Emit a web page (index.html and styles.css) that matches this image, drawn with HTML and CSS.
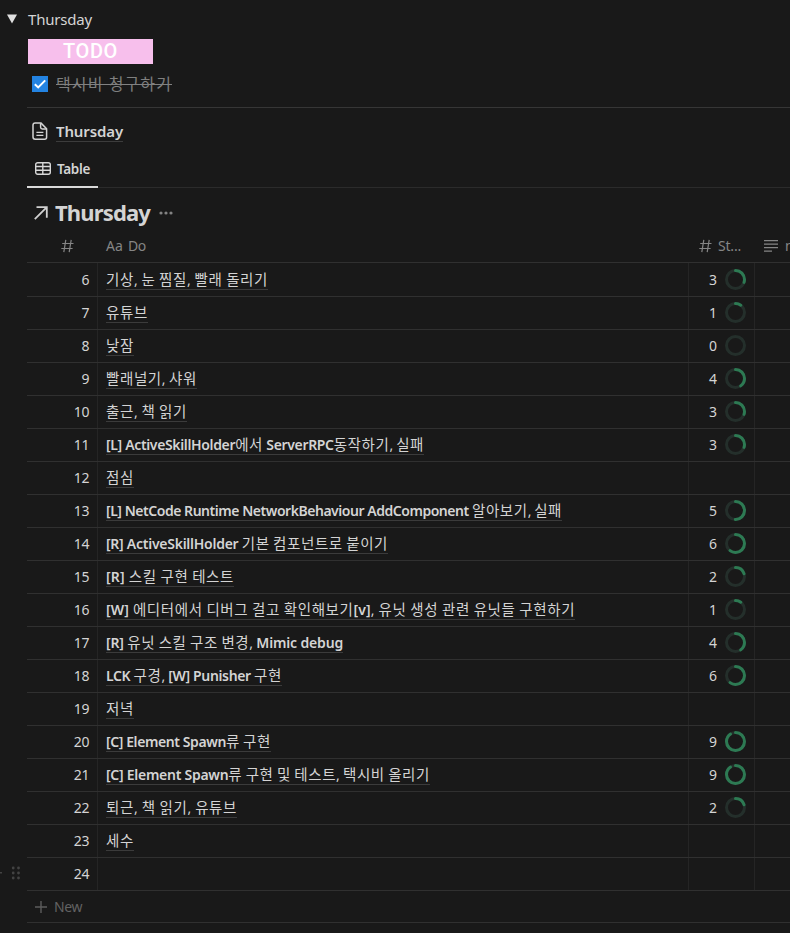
FILE: index.html
```html
<!DOCTYPE html>
<html lang="ko">
<head>
<meta charset="utf-8">
<title>Thursday</title>
<link rel="stylesheet" href="styles.css">
</head>
<body>
<main class="page">
  <div class="toggle">
    <svg class="caret" width="10" height="10" viewBox="0 0 10 10"><path d="M0 .5h10L5 9.5z" fill="#e0e0e0"/></svg>
    <span data-width="64">Thursday</span>
  </div>
  <div class="banner"><span data-width="55">TODO</span></div>
  <div class="todo">
    <svg class="check" width="16" height="16" viewBox="0 0 16 16"><path fill="#2383e2" d="M0 0h16v16H0z"/><path d="M2.8 8.2l3.4 3.2 7-7" fill="none" stroke="#fff" stroke-width="2"/></svg>
    <span class="done" data-width="116">택시비 청구하기</span>
  </div>
  <div class="pagelink">
    <svg width="16" height="18" viewBox="0 0 16 18" fill="none" stroke="#d3d3d3" stroke-width="1.5" stroke-linejoin="round"><path d="M3.2.9h5.6l5.8 5.8v8.5a2 2 0 0 1-2 2H3.2a2.2 2.2 0 0 1-2.2-2.2V3.1A2.2 2.2 0 0 1 3.2.9z"/><path d="M8.6 1.2v4a1.7 1.7 0 0 0 1.7 1.7h4"/><path d="M4.4 10.3h7M4.4 13.3h7" stroke-width="1.2"/></svg>
    <span class="linktext" data-width="67">Thursday</span>
  </div>
  <div class="tabs">
    <div class="tab">
      <svg width="16" height="13" viewBox="0 0 16 13" fill="none" stroke="#d8d8d8" stroke-width="1.4"><rect x=".7" y=".7" width="14.6" height="11.6" rx="2"/><path d="M.7 4.5h14.6M.7 8.3h14.6M7.8.7v11.6"/></svg>
      <span data-width="33">Table</span>
    </div>
  </div>
  <div class="heading">
    <svg width="14" height="14" viewBox="0 0 14 14" fill="none" stroke="#d0d0d0" stroke-width="1.8"><path d="M2.5 1.2h10.3v10.6M12.6 1.4L.8 13.2"/></svg>
    <h1 data-width="95">Thursday</h1>
    <svg class="dots" width="14" height="4" viewBox="0 0 14 4" fill="#838383"><circle cx="2" cy="2" r="1.6"/><circle cx="7" cy="2" r="1.6"/><circle cx="12" cy="2" r="1.6"/></svg>
  </div>
  <div class="head">
    <div class="h-num"><svg width="13" height="14" viewBox="0 0 13 14" fill="none" stroke="#858585" stroke-width="1.2"><path d="M4.8.8l-2 12.4M10.2.8l-2 12.4M1.2 4.5h11.3M.3 9.5h11.3"/></svg></div>
    <div class="h-do"><span data-width="17">Aa</span><span data-width="18">Do</span></div>
    <div class="h-step"><svg width="13" height="14" viewBox="0 0 13 14" fill="none" stroke="#858585" stroke-width="1.2"><path d="M4.8.8l-2 12.4M10.2.8l-2 12.4M1.2 4.5h11.3M.3 9.5h11.3"/></svg><span data-width="23">St...</span></div>
    <div class="h-note"><svg width="14" height="12" viewBox="0 0 14 12" stroke="#858585" stroke-width="1.3"><path d="M0 .7h14M0 4.2h14M0 7.7h14M0 11.2h8"/></svg><span>n</span></div>
  </div>
  <div id="rows"></div>
  <div class="new">
    <svg width="12" height="12" viewBox="0 0 12 12" stroke="#5c5c5c" stroke-width="1.4"><path d="M6 0v12M0 6h12"/></svg>
    <span data-width="28">New</span>
  </div>
</main>
<script src="rows.js"></script>
</body>
</html>
```
FILE: styles.css
```css
* { box-sizing: border-box; }
body { margin: 0; width: 790px; height: 933px; overflow: hidden; background: #191919; color: #d4d4d4; font: 14px/20px "Noto Sans", "Noto Sans CJK KR", sans-serif; }
svg { display: block; flex: none; }
span, h1 { white-space: nowrap; }
.page { height: 933px; padding-left: 27px; display: flex; flex-direction: column; overflow: hidden; }
.toggle { height: 39px; padding-bottom: 1px; display: flex; align-items: center; gap: 11px; margin-left: -20px; font-size: 15px; }
.banner { width: 125px; height: 25px; margin-left: 1px; background: #f7bfec; color: #fff; text-align: center; font: 500 20px/25px Roboto, sans-serif; }
.todo { height: 44px; padding: 0 0 3px 5px; border-bottom: 1px solid #363636; display: flex; align-items: center; gap: 8px; color: #7f7f7f; font-size: 16px; }
.done { position: relative; }
.done::after { content: ""; position: absolute; left: 0; right: 0; top: 10px; border-top: 1px solid #818181; }
.pagelink { height: 48px; padding: 0 0 2px 5px; display: flex; align-items: center; gap: 8px; font-size: 15px; font-weight: 600; }
.linktext { border-bottom: 1px solid #3c3c3c; height: 21px; line-height: 20px; }
.tabs { height: 32px; border-bottom: 1px solid #2b2b2b; }
.tab { width: 71px; height: 32px; padding: 0 0 5px 8px; border-bottom: 2px solid #d9d9d9; display: flex; align-items: center; gap: 6px; font-size: 13.5px; font-weight: 600; }
.heading { height: 43px; padding: 6px 0 0 7px; display: flex; align-items: center; gap: 7px; }
h1 { margin: 0; font-size: 22px; line-height: 30px; font-weight: 700; transform: translateY(-1px); }
.dots { margin-left: 2px; }
.head { height: 32px; border-bottom: 1px solid #303030; display: flex; color: #858585; }
.head > div { height: 29px; display: flex; align-items: center; flex: none; }
.h-num { width: 71px; padding-left: 34px; }
.h-do { width: 591px; padding-left: 8px; gap: 5px; }
.h-step { width: 66px; padding-left: 10px; gap: 6px; }
.h-note { width: 35px; padding-left: 9px; gap: 7px; overflow: hidden; }
.row { height: 33px; border-bottom: 1px solid #303030; display: flex; position: relative; }
.row:first-child { height: 34px; }
.row > div { border-right: 1px solid #252525; flex: none; display: flex; align-items: center; }
.num { width: 71px; justify-content: flex-end; padding-right: 8px; }
.title { width: 591px; padding-left: 8px; }
.name { height: 20px; line-height: 20px; border-bottom: 1px solid #3b3b3b; }
.ko { font-family: "Noto Sans CJK KR", sans-serif; font-size: 14.5px; line-height: 18px; letter-spacing: .6px; }
.en { font-weight: 600; }
.step { width: 66px; padding-right: 8px; gap: 8px; justify-content: flex-end; }
.step svg { margin-top: -1px; }
.handle { position: absolute; left: -27px; top: 8px; }
.new { height: 32px; border-bottom: 1px solid #303030; padding-left: 8px; display: flex; align-items: center; gap: 7px; color: #626262; flex: none; }
```
FILE: rows.js
```javascript
// hour, title, title width, completed steps
const data = [
  [6, "기상, 눈 찜질, 빨래 돌리기", 162, 3],
  [7, "유튜브", 42, 1],
  [8, "낮잠", 28, 0],
  [9, "빨래널기, 샤워", 91, 4],
  [10, "출근, 책 읽기", 81, 3],
  [11, "[L] ActiveSkillHolder에서 ServerRPC동작하기, 실패", 318, 3],
  [12, "점심", 28, null],
  [13, "[L] NetCode Runtime NetworkBehaviour AddComponent 알아보기, 실패", 456, 5],
  [14, "[R] ActiveSkillHolder 기본 컴포넌트로 붙이기", 282, 6],
  [15, "[R] 스킬 구현 테스트", 128, 2],
  [16, "[W] 에디터에서 디버그 걸고 확인해보기[v], 유닛 생성 관련 유닛들 구현하기", 469, 1],
  [17, "[R] 유닛 스킬 구조 변경, Mimic debug", 237, 4],
  [18, "LCK 구경, [W] Punisher 구현", 176, 6],
  [19, "저녁", 28, null],
  [20, "[C] Element Spawn류 구현", 165, 9],
  [21, "[C] Element Spawn류 구현 및 테스트, 택시비 올리기", 324, 9],
  [22, "퇴근, 책 읽기, 유튜브", 131, 2],
  [23, "세수", 28, null],
  [24, "", 0, null]
];

const ring = n => {
  const c = 2 * Math.PI * 9;
  const arc = n ? `<circle cx="10.5" cy="10.5" r="9" stroke="#2d7a53" stroke-linecap="round" stroke-dasharray="${c * n / 10} ${c}" transform="rotate(-90 10.5 10.5)"/>` : "";
  return `<svg width="21" height="21" viewBox="0 0 21 21" fill="none" stroke-width="3"><circle cx="10.5" cy="10.5" r="9" stroke="#242f2b"/>${arc}</svg>`;
};
const markup = t => t.replace(/[가-힣]+|[A-Za-z\[\]]+/g, m => `<span class="${/[가-힣]/.test(m) ? "ko" : "en"}">${m}</span>`);
const handle = `<svg class="handle" width="22" height="14" viewBox="0 0 22 14" fill="#434343"><path d="M0 6h2v1.4H0z"/>${[2, 7, 12].map(y => `<circle cx="13.2" cy="${y}" r="1.4"/><circle cx="18.5" cy="${y}" r="1.4"/>`).join("")}</svg>`;

document.getElementById("rows").innerHTML = data.map(([n, t, w, s]) => `
  <div class="row">
    <div class="num"><span data-width="${n < 10 ? 7.6 : 15.2}">${n}</span></div>
    <div class="title">${t ? `<span class="name" data-width="${w}">${markup(t)}</span>` : ""}</div>
    <div class="step">${s === null ? "" : `<span>${s}</span>${ring(s)}`}</div>
    ${n === 24 ? handle : ""}
  </div>`).join("");

// Spread the tracking so each label fills its assigned width; Hangul runs in titles keep their own.
document.querySelectorAll("[data-width]").forEach(el => {
  const range = document.createRange();
  range.selectNodeContents(el);
  const fixed = [...el.querySelectorAll(".ko")].reduce((sum, k) => sum + k.textContent.length, 0);
  const count = el.textContent.length - fixed;
  if (!count) return;
  const gap = (Number(el.dataset.width) - range.getBoundingClientRect().width) / count;
  el.style.letterSpacing = gap + "px";
});
```
